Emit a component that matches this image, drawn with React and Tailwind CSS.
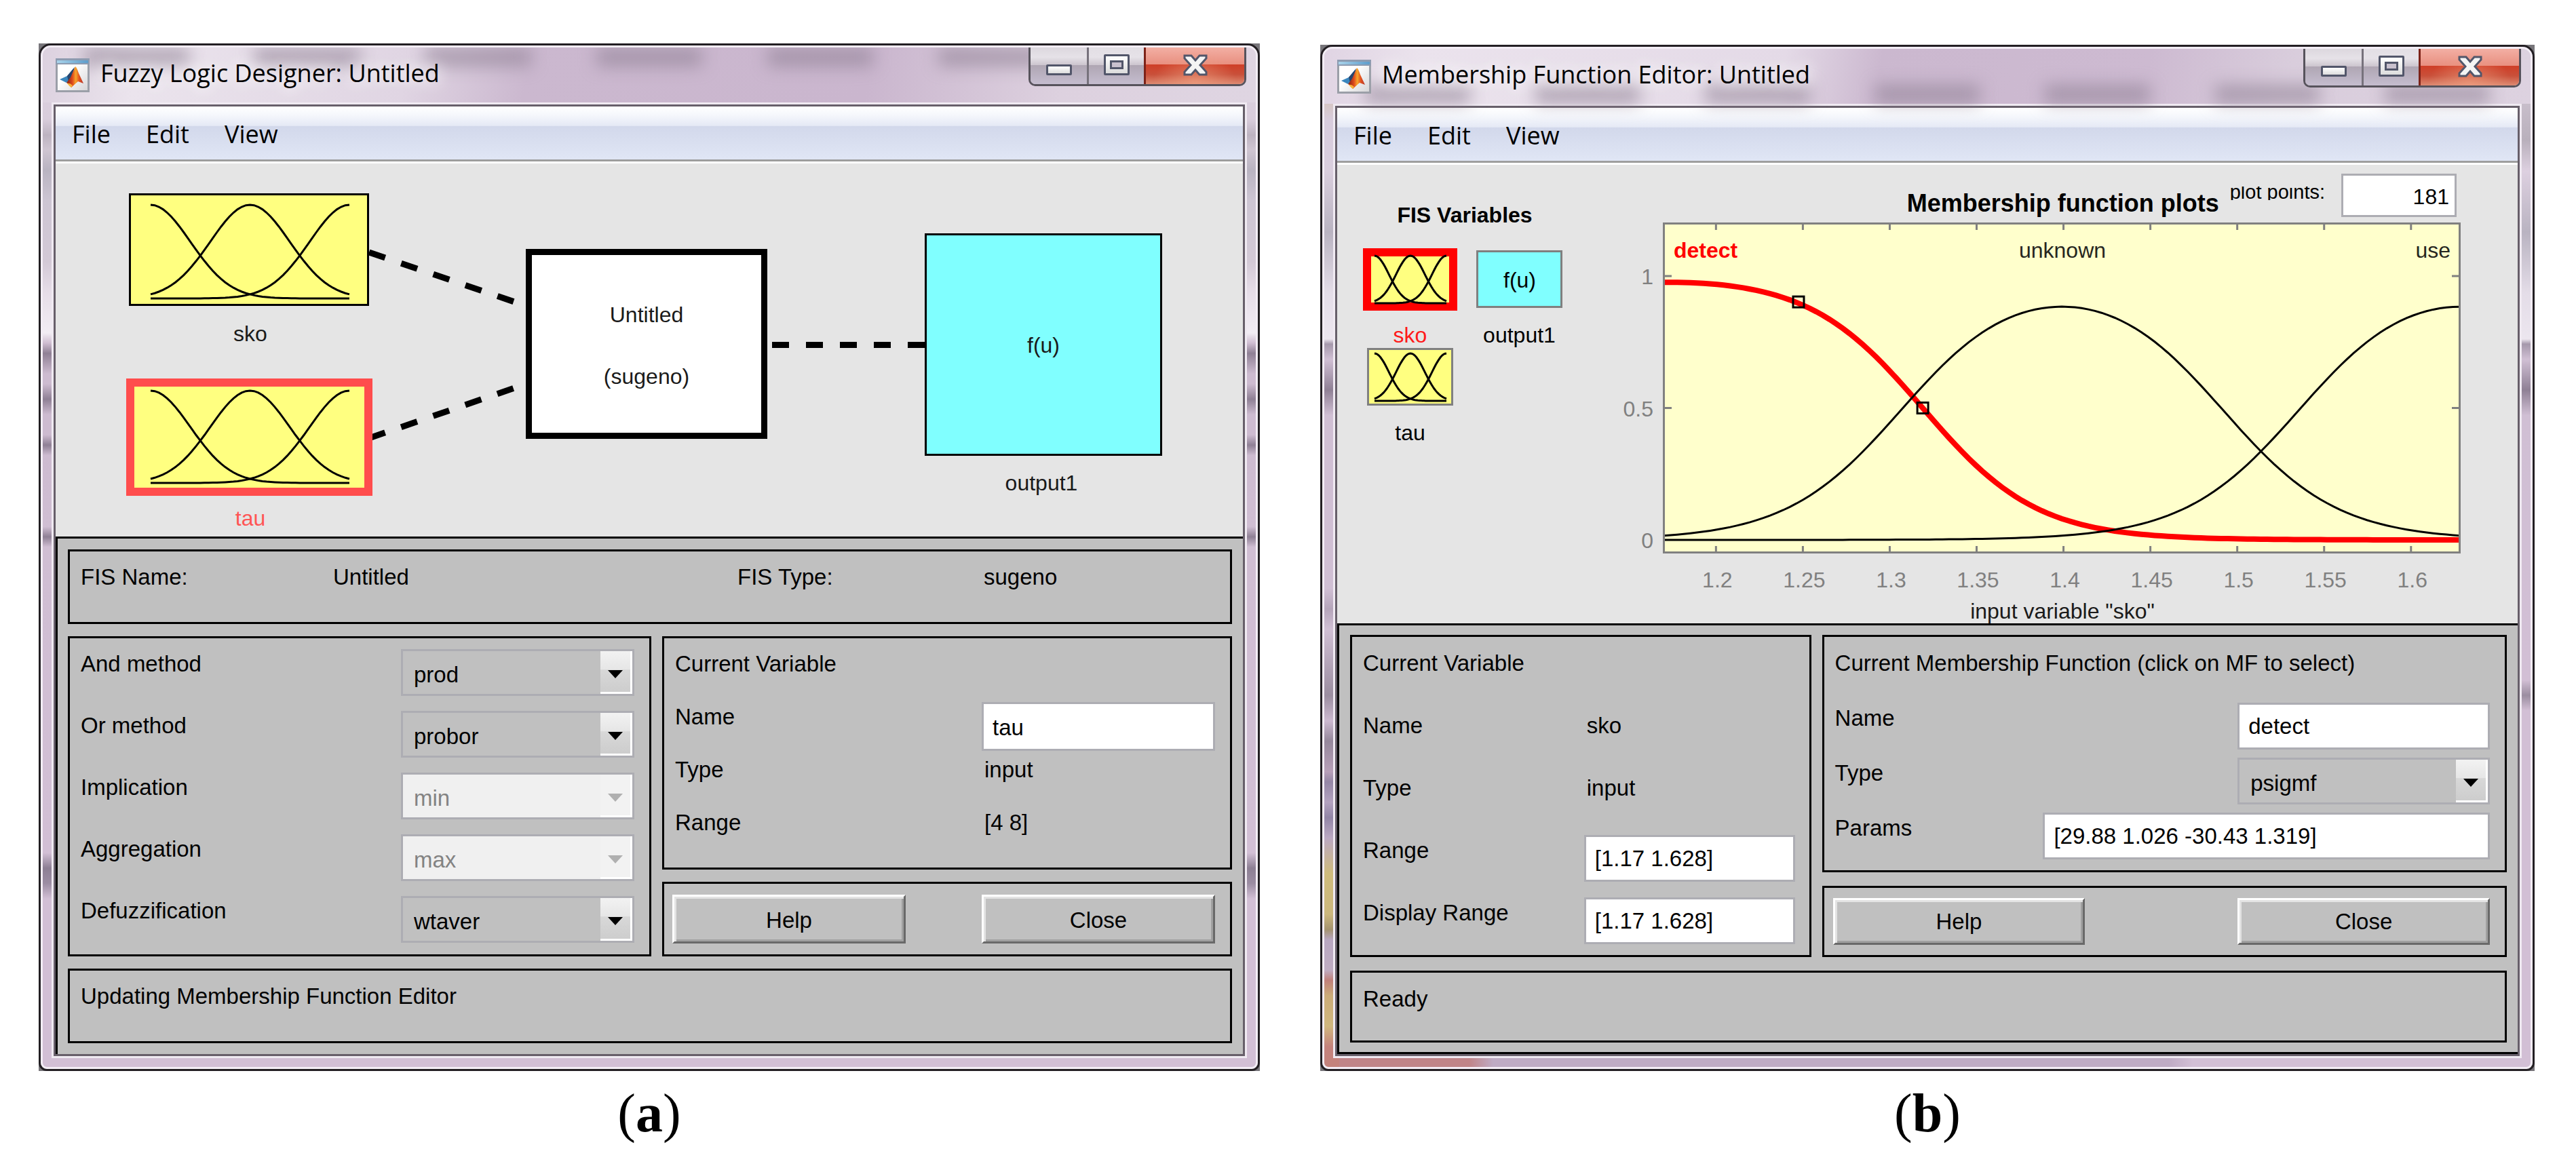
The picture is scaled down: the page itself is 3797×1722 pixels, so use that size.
import { useState } from "react";

const sans = "font-['Liberation_Sans',Arial,sans-serif]";
const ui = "font-['Open_Sans','Noto_Sans',sans-serif]";

// sampled curve -> svg path
function curve(fn, toX, toY, from, to, steps = 120) {
  let d = "";
  for (let i = 0; i <= steps; i++) {
    const v = from + ((to - from) * i) / steps;
    d += `${i === 0 ? "M" : "L"}${toX(v).toFixed(1)} ${toY(fn(v)).toFixed(1)}`;
  }
  return d;
}

const gauss = (c) => (t) => Math.exp(-((t - c) ** 2) / 0.08);

// product of two sigmoids
const psigmf = (a1, c1, a2, c2) => (x) =>
  1 / (1 + Math.exp(-a1 * (x - c1))) / (1 + Math.exp(-a2 * (x - c2)));

function MfCurves({ x, y, width, height }) {
  return (
    <g fill="none" stroke="#000" strokeWidth="3">
      {[0, 0.5, 1].map((c) => (
        <path key={c} d={curve(gauss(c), (t) => x + t * width, (v) => y + height - v * height, 0, 1, 48)} />
      ))}
    </g>
  );
}

function MatlabIcon() {
  return (
    <svg viewBox="0 0 50 50" className="size-[50px] shrink-0" aria-hidden="true">
      <defs>
        <linearGradient id="mlPaper" x1="0" y1="0" x2="1" y2="1">
          <stop offset="0.4" stopColor="#fff" />
          <stop offset="1" stopColor="#d4d4d6" />
        </linearGradient>
        <linearGradient id="mlBar">
          <stop offset="0" stopColor="#a9d3ea" />
          <stop offset="1" stopColor="#5c9ccb" />
        </linearGradient>
        <linearGradient id="mlPeak">
          <stop offset="0" stopColor="#7c1d14" />
          <stop offset="0.35" stopColor="#e04a1c" />
          <stop offset="0.55" stopColor="#f7a62c" />
          <stop offset="0.75" stopColor="#e2511f" />
          <stop offset="1" stopColor="#b5382a" />
        </linearGradient>
      </defs>
      <rect x="1.5" y="1.5" width="47" height="47" fill="url(#mlPaper)" stroke="#9b9fa8" strokeWidth="3" />
      <rect x="0" y="0" width="50" height="9" fill="#8d9bb0" />
      <rect x="2" y="3" width="46" height="4" fill="url(#mlBar)" />
      <path d="M6 31L17 26L27 14L24 27L16 36Z" fill="#3b86bd" />
      <path d="M17 26L28 13L24 28L19 34Z" fill="#28456e" />
      <path d="M16 36L22 28L29 12Q31 13 34 22L41 37L33 34L23 43Q21 38 16 36Z" fill="url(#mlPeak)" />
      <path d="M17 37Q21 36 25 40L23 43Q20 41 17 37Z" fill="#f7b13a" />
    </svg>
  );
}

function WindowControls() {
  return (
    <div className="-mt-[3px] flex h-[60px] w-[321px] overflow-hidden rounded-b-[10px] border-3 border-t-0 border-[#57535c]">
      <button
        aria-label="Minimize"
        className="flex w-[86px] items-end justify-center border-r-3 border-[#77727c] bg-[linear-gradient(180deg,#dad5dc,#e6e2e8_30%,#cdc6cf_50%,#afa6b3_51%,#c5bdcf)] pb-[13px]"
      >
        <span className="h-4 w-[38px] rounded-xs border-3 border-[#52566a] bg-[linear-gradient(180deg,#fff,#dcdcdc)]" />
      </button>
      <button
        aria-label="Maximize"
        className="flex w-[84px] items-center justify-center border-r-3 border-[#7d2218] bg-[linear-gradient(180deg,#e2dee4,#e6e2e8_30%,#cdc6cf_50%,#afa6b3_51%,#c5bdcf)]"
      >
        <span className="flex h-[31px] w-[38px] items-center justify-center rounded-xs border-3 border-[#52566a] bg-[linear-gradient(180deg,#fff,#dcdcdc)]">
          <span className="h-[13px] w-[20px] border-3 border-[#52566a] bg-[#c9c1ce]" />
        </span>
      </button>
      <button
        aria-label="Close window"
        className="flex flex-1 items-center justify-center bg-[radial-gradient(ellipse_at_50%_100%,#f0a080aa,transparent_60%),linear-gradient(180deg,#f4b3a8,#e88f80_49%,#cf3f28_50%,#c9503a_75%,#dd8a72)]"
      >
        <svg viewBox="0 0 36 32" className="h-8 w-9" aria-hidden="true">
          <path
            d="M2 2H12L18 9L24 2H34V6L25 16L34 26V30H24L18 23L12 30H2V26L11 16L2 6Z"
            fill="#f4f4f4"
            stroke="#52566a"
            strokeWidth="3"
          />
        </svg>
      </button>
    </div>
  );
}

function AppWindow({ title, frame, titleBar, smudge, children }) {
  return (
    <section className="bg-[#77757a]">
      <div className="rounded-t-[18px] rounded-b-[12px] border-3 border-[#231f23]">
        <div className={`overflow-hidden rounded-t-[15px] rounded-b-[9px] border-3 border-[#f3edf5] px-[13px] pb-[13px] ${frame}`}>
          <header className={`relative -mx-[13px] flex h-[81px] justify-between pr-[14px] pl-[19px] ${titleBar}`}>
            <div className={`absolute inset-x-[60px] flex h-7 justify-around gap-24 blur-md ${smudge}`} aria-hidden="true">
              {[0, 1, 2, 3, 4, 5, 6].map((n) => (
                <span key={n} className="flex-1 bg-[#8d7f93]/60" />
              ))}
            </div>
            <div className="relative flex items-center gap-4">
              <MatlabIcon />
              <h1 className={`${ui} self-start text-[36px] leading-[76px] text-black [text-shadow:0_0_20px_#fff,0_0_30px_#fff]`}>
                {title}
              </h1>
            </div>
            <div className="relative">
              <WindowControls />
            </div>
          </header>

          <div className="border-3 border-[#f0eaf2]">
            <div className="border-3 border-[#675f6a]">
              <nav
                className={`${ui} flex h-[84px] gap-[52px] border-b-3 border-white bg-[linear-gradient(180deg,#fff_0%,#f5f7fc_16%,#e5e9f5_35%,#d2d8eb_36%,#e0e6f5_96%,#9c9c9c_97%)] pl-6 text-[36px] leading-[76px] text-black`}
              >
                <button>File</button>
                <button>Edit</button>
                <button>View</button>
              </nav>
              {children}
            </div>
          </div>
        </div>
      </div>
    </section>
  );
}

function Panel({ className = "", children }) {
  return <div className={`border-3 border-black ${className}`}>{children}</div>;
}

function Dropdown({ id, value, disabled = false }) {
  return (
    <div className="relative h-[69px]">
      <select
        id={id}
        disabled={disabled}
        defaultValue={value}
        className="size-full appearance-none border-3 border-[#adadb3] bg-[#c0c0c0] pt-1.5 pl-4 text-black opacity-100 disabled:bg-[#f0f0f0] disabled:text-[#838383]"
      >
        <option>{value}</option>
      </select>
      <span
        className={`pointer-events-none absolute inset-y-[3px] right-[3px] flex w-[47px] items-center justify-center border-r-3 border-b-3 border-white pt-2 ${
          disabled ? "bg-[#f2f2f2]" : "bg-[linear-gradient(180deg,#f2f2f2,#e6e6e6_45%,#d8d8d8_46%,#cdcdcd)]"
        }`}
      >
        <svg viewBox="0 0 22 12" className="h-3 w-[22px]" aria-hidden="true">
          <path d="M0 0H22L11 12Z" fill={disabled ? "#b0b0b0" : "#000"} />
        </svg>
      </span>
    </div>
  );
}

function TextBox({ id, initial, className = "h-[69px]" }) {
  const [value, setValue] = useState(initial);
  return (
    <input
      id={id}
      value={value}
      onChange={(e) => setValue(e.target.value)}
      className={`w-full min-w-0 border-3 border-[#adadb3] bg-white px-[13px] text-black ${className}`}
    />
  );
}

function PushButton({ className = "", children }) {
  return (
    <button
      className={`border-3 border-t-white border-r-[#696969] border-b-[#696969] border-l-white bg-[#c0c0c0] shadow-[inset_3px_3px_0_#e3e3e3,inset_-3px_-3px_0_#a0a0a0] ${className}`}
    >
      {children}
    </button>
  );
}

const methods = [
  { id: "and", label: "And method", value: "prod" },
  { id: "or", label: "Or method", value: "probor" },
  { id: "imp", label: "Implication", value: "min", disabled: true },
  { id: "agg", label: "Aggregation", value: "max", disabled: true },
  { id: "defuzz", label: "Defuzzification", value: "wtaver" },
];

function FisDiagram() {
  return (
    <svg viewBox="0 0 1750 550" className={`${sans} block w-full bg-[#e5e5e5] text-[32px]`} role="img" aria-label="FIS diagram">
      <g stroke="#000" strokeWidth="9" strokeDasharray="25 25">
        <path d="M462 131L679 205" />
        <path d="M462 405L679 330" />
        <path d="M1056 267.5H1281" />
      </g>

      <rect x="109.5" y="45.5" width="351" height="163" fill="#ffff80" stroke="#000" strokeWidth="3" />
      <MfCurves x={140} y={61} width={293} height={138} />
      <rect x="110" y="323" width="351" height="161" fill="#ffff80" stroke="#ff4d4d" strokeWidth="12" />
      <MfCurves x={140} y={335} width={293} height={136} />
      <rect x="697.5" y="130.5" width="347" height="271" fill="#fff" stroke="#000" strokeWidth="9" />
      <rect x="1282.5" y="104.5" width="347" height="325" fill="#80ffff" stroke="#000" strokeWidth="3" />

      <g textAnchor="middle" fill="#1a1a1a">
        <text x="287" y="262">sko</text>
        <text x="287" y="534" fill="#ff5555">tau</text>
        <text x="871" y="234">Untitled</text>
        <text x="871" y="325">(sugeno)</text>
        <text x="1456" y="279">f(u)</text>
        <text x="1453" y="482">output1</text>
      </g>
    </svg>
  );
}

function FuzzyLogicDesigner() {
  return (
    <AppWindow
      title="Fuzzy Logic Designer: Untitled"
      frame="bg-[linear-gradient(180deg,#ddd2e0_0%,#d9cddc_7%,#bdb3c1_8.6%,#cfc5d2_10%,#b9b3c1_12%,#cdc5d3_15%,#d3c9d6_21%,#e6dde8_24%,#f2edf4_28%,#cfbdd1_29%,#8f8095_30%,#cdbbd0_32%,#cdbbd0_33%,#8f8095_34.5%,#cdbbd0_36%,#cdbbd0_38%,#8f8095_39%,#cdbbd0_40%,#d0bed3_47%,#8f8095_48%,#d0bed3_49%,#d2bfd5_79%,#8d7f94_80.5%,#9c8da3_82%,#d2bfd5_83.5%)]"
      titleBar="bg-[linear-gradient(100deg,#dcd1df_0%,#ebe4ed_8%,#e0d5e3_30%,#cbb8cf_40%,#cab6ce_68%,#ddd1df_84%,#dfd5e2_100%)]"
      smudge="top-0"
    >
      <FisDiagram />

      <div className={`${sans} flex flex-col gap-[18px] border-t-3 border-l-3 border-black bg-[#c0c0c0] px-4 py-4 pl-[15px] text-[33px] leading-[44px] text-black`}>
        <Panel className="grid h-[110px] grid-cols-[372fr_596fr_363fr_363fr] pt-4 pl-4">
          <span>FIS Name:</span>
          <span>Untitled</span>
          <span>FIS Type:</span>
          <span>sugeno</span>
        </Panel>

        <div className="grid grid-cols-[43fr_42fr] gap-4">
          <Panel className="flex flex-col gap-[22px] pt-4 pr-[22px] pb-[17px] pl-4">
            {methods.map((m) => (
              <div key={m.id} className="grid grid-cols-[472fr_344fr] items-start">
                <label htmlFor={m.id}>{m.label}</label>
                <Dropdown id={m.id} value={m.value} disabled={m.disabled} />
              </div>
            ))}
          </Panel>

          <div className="flex flex-col gap-[18px]">
            <Panel className="flex-1 pt-4 pr-[22px] pl-4">
              <h2 className="h-[78px]">Current Variable</h2>
              <div className="grid auto-rows-[78px] grid-cols-[452fr_344fr] items-start">
                <label htmlFor="var-name">Name</label>
                <TextBox id="var-name" initial="tau" className="h-[72px] pt-1" />
                <span>Type</span>
                <span className="pl-1">input</span>
                <span>Range</span>
                <span className="pl-1">[4 8]</span>
              </div>
            </Panel>
            <Panel className="grid grid-cols-[344fr_112fr_344fr] py-4 pr-[22px] pl-3">
              <PushButton className="h-[72px] pt-1">Help</PushButton>
              <PushButton className="col-start-3 h-[72px] pt-1">Close</PushButton>
            </Panel>
          </div>
        </div>

        <Panel className="h-[110px] pt-4 pl-4">
          <p>Updating Membership Function Editor</p>
        </Panel>
      </div>
    </AppWindow>
  );
}

// input variable range and its membership functions
const lo = 1.17;
const hi = 1.628;
const plotX = (v) => 61.5 + ((v - lo) / (hi - lo)) * 1173;
const plotY = (v) => 468 - v * 389;
const detect = psigmf(29.88, 1.026, -30.43, 1.319);
const unknown = psigmf(30, 1.3073, -30, 1.491);
const use = psigmf(30, 1.5363, -30, 1.7197);
const xTicks = [1.2, 1.25, 1.3, 1.35, 1.4, 1.45, 1.5, 1.55, 1.6];
const yTicks = [0, 0.5, 1];

function MembershipPlot() {
  return (
    <svg viewBox="0 0 1320 591" className="block w-full text-[32px]" role="img" aria-label="Membership function plots">
      <rect x="61.5" y="1.5" width="1173" height="485" fill="#ffffcc" />
      <path d={curve(detect, plotX, plotY, lo, hi)} fill="none" stroke="#f00" strokeWidth="8" />
      <g fill="none" stroke="#000" strokeWidth="3">
        <path d={curve(unknown, plotX, plotY, lo, hi)} />
        <path d={curve(use, plotX, plotY, lo, hi)} />
        <rect x={plotX(1.2475) - 8} y={plotY(0.902) - 8} width="16" height="16" />
        <rect x={plotX(1.319) - 8} y={plotY(0.5) - 8} width="16" height="16" />
      </g>
      <g fill="none" stroke="#808080" strokeWidth="3">
        <rect x="61.5" y="1.5" width="1173" height="485" />
        {xTicks.map((t) => (
          <path key={t} d={`M${plotX(t)} 2v9M${plotX(t)} 486v-9`} />
        ))}
        {yTicks.slice(1).map((t) => (
          <path key={t} d={`M62 ${plotY(t)}h11M1234 ${plotY(t)}h-11`} />
        ))}
      </g>

      <g fill="#808080" textAnchor="middle">
        {xTicks.map((t) => (
          <text key={t} x={plotX(t) + 2} y="538">
            {t}
          </text>
        ))}
      </g>
      <g fill="#808080" textAnchor="end">
        {yTicks.map((t) => (
          <text key={t} x="46" y={plotY(t) + 12}>
            {t}
          </text>
        ))}
      </g>
      <text x="76" y="52" fill="#f00" fontWeight="bold">detect</text>
      <text x="649" y="52" fill="#262620" textAnchor="middle">unknown</text>
      <text x="1221" y="52" fill="#262620" textAnchor="end">use</text>
      <text x="649" y="584" fill="#1a1a1a" textAnchor="middle">input variable "sko"</text>
    </svg>
  );
}

function VariableButton({ name, selected = false, output = false }) {
  return (
    <button className="flex flex-col items-center gap-5 leading-8">
      <svg viewBox="0 0 140 92" className="h-[92px] w-[140px]" aria-hidden="true">
        {selected ? (
          <rect x="6" y="6" width="127" height="80" fill="#ffff80" stroke="#f00" strokeWidth="12" />
        ) : (
          <rect x="7.5" y="4.5" width="124" height="82" fill={output ? "#80ffff" : "#ffff80"} stroke="#808080" strokeWidth="3" />
        )}
        {output ? (
          <text x="70" y="58" textAnchor="middle">f(u)</text>
        ) : (
          <MfCurves x={17} y={11} width={106} height={70} />
        )}
      </svg>
      <span className={selected ? "text-[#ff1a1a]" : ""}>{name}</span>
    </button>
  );
}

function MembershipFunctionEditor() {
  return (
    <AppWindow
      title="Membership Function Editor: Untitled"
      frame="[background:linear-gradient(180deg,#e0d4e3_0%,#d3bd9f_3%,#d8ccdd_7%,#d9cedd_12%,#b9b3c1_18%,#e4dde8_24%,#ece6ef_28.5%,#a598ab_29%,#d0bfd4_30.5%,#8f8095_33.5%,#d0bfd4_36%,#d0bfd4_53%,#b5a5ba_55%,#d0bfd4_57%,#9b8da0_63.5%,#ccb9d0_66%,#95879b_68%,#b79fb8_71%,#9486a5_72%,#b3a2bf_74%,#9285a6_75.5%,#bba8c2_77.5%,#cfbb7c_81%,#ccb77d_85%,#a5936f_86.5%,#b8a6c0_87.5%,#bfacc2_90.5%,#c0807a_91.5%,#cbac78_93%,#d0b77e_96%,#c4827c_98%)_left/22px_100%_no-repeat,linear-gradient(90deg,#c08488_12%,#bfabc4_14%,#bfabc4_70%,#d2bfd5_72%)_bottom/100%_22px_no-repeat,linear-gradient(180deg,#ddd2e0_0%,#b9b0bc_9%,#ddd0e0_12%,#b9b3c1_18%,#e4dde8_24%,#ece6ef_28.5%,#a598ab_29%,#d0bfd4_30.5%,#8f8095_33.5%,#d0bfd4_36%,#d2bfd5_62%,#9b8da0_63.5%,#d2bfd5_65%)]"
      titleBar="bg-[linear-gradient(100deg,#e0d4e3_0%,#ebe3ed_8%,#e4dae7_38%,#cbb8cf_46%,#cdbad1_68%,#d9cddc_80%,#ddd2e0_100%)]"
      smudge="bottom-0"
    >
      <div className={`${sans} grid grid-cols-[7fr_22fr] bg-[#e5e5e5] text-[32px] text-black`}>
        <div className="pt-[52px] pl-[27px]">
          <div className="grid w-[322px] grid-cols-2 justify-items-center">
            <h2 className="col-span-2 mb-[27px] leading-[44px] font-bold">FIS Variables</h2>
            <VariableButton name="sko" selected />
            <VariableButton name="output1" output />
            <VariableButton name="tau" />
          </div>
        </div>

        <div>
          <div className="flex h-[85px] items-start justify-end pt-[13px] pr-[90px]">
            <h2 className="mr-4 self-end pb-2 text-[36px] leading-10 font-bold">Membership function plots</h2>
            <label htmlFor="points" className="mt-[19px] mr-6 h-5 overflow-hidden text-[29px] leading-4">
              plot points:
            </label>
            <div className="w-[170px]">
              <TextBox id="points" initial="181" className="h-[64px] pt-1 pr-2! text-right" />
            </div>
          </div>
          <MembershipPlot />
        </div>
      </div>

      <div className={`${sans} flex flex-col gap-5 border-y-3 border-l-3 border-black bg-[#c0c0c0] px-4 pt-[14px] pb-[14px] text-[33px] leading-[46px] text-black`}>
        <div className="grid grid-cols-[68fr_101fr] gap-4">
          <Panel className="pt-4 pr-[21px] pb-[15px] pl-4">
            <h2 className="h-[92px]">Current Variable</h2>
            <div className="grid auto-rows-[70px] grid-cols-[326fr_311fr] items-start gap-y-[22px]">
              <span>Name</span>
              <span className="pl-1">sko</span>
              <span>Type</span>
              <span className="pl-1">input</span>
              <label htmlFor="range">Range</label>
              <TextBox id="range" initial="[1.17 1.628]" />
              <label htmlFor="display-range">Display Range</label>
              <TextBox id="display-range" initial="[1.17 1.628]" />
            </div>
          </Panel>

          <div className="flex flex-col gap-5">
            <Panel className="flex flex-1 flex-col gap-3 pt-4 pr-[22px] pb-3 pl-4">
              <h2 className="h-[69px]">Current Membership Function (click on MF to select)</h2>
              <div className="grid grid-cols-[594fr_372fr] items-start">
                <label htmlFor="mf-name">Name</label>
                <TextBox id="mf-name" initial="detect" />
              </div>
              <div className="grid grid-cols-[594fr_372fr] items-start">
                <label htmlFor="mf-type">Type</label>
                <Dropdown id="mf-type" value="psigmf" />
              </div>
              <div className="grid grid-cols-[307fr_659fr] items-start">
                <label htmlFor="mf-params">Params</label>
                <TextBox id="mf-params" initial="[29.88 1.026 -30.43 1.319]" />
              </div>
            </Panel>
            <Panel className="grid grid-cols-[372fr_225fr_372fr] py-[15px] pr-[22px] pl-[13px]">
              <PushButton className="h-[69px]">Help</PushButton>
              <PushButton className="col-start-3 h-[69px]">Close</PushButton>
            </Panel>
          </div>
        </div>

        <Panel className="h-[106px] pt-4 pl-4">
          <p>Ready</p>
        </Panel>
      </div>
    </AppWindow>
  );
}

function Caption({ letter }) {
  return (
    <figcaption className="mt-3 text-center font-['Liberation_Serif',serif] text-[80px] leading-[100px] text-black">
      (<b>{letter}</b>)
    </figcaption>
  );
}

export default function App() {
  return (
    <main className="grid min-h-screen grid-cols-[180fr_179fr] items-start gap-[89px] bg-white pt-16 pr-[61px] pl-[57px]">
      <figure>
        <FuzzyLogicDesigner />
        <Caption letter="a" />
      </figure>
      <figure className="pt-[2px]">
        <MembershipFunctionEditor />
        <Caption letter="b" />
      </figure>
    </main>
  );
}
